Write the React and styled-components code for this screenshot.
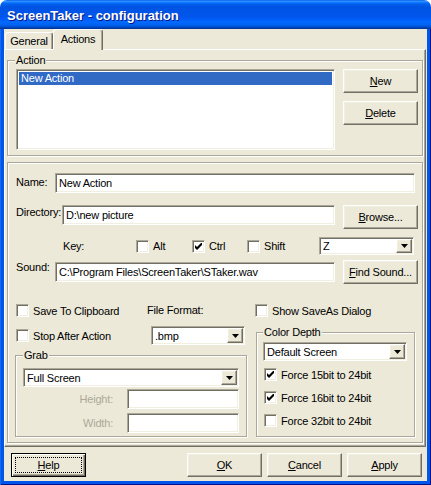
import React from "react";
import styled, { createGlobalStyle, css } from "styled-components";

const GlobalStyle = createGlobalStyle`
  html, body {
    margin: 0;
    padding: 0;
    background: #ffffff;
  }
  body {
    font-family: "Liberation Sans", Arial, sans-serif;
    font-size: 11px;
    letter-spacing: -0.2px;
    color: #000000;
  }
  * {
    box-sizing: border-box;
  }
`;

const sunken = css`
  border: 1px solid;
  border-color: #aca899 #ffffff #ffffff #aca899;
  box-shadow: inset 1px 1px 0 #716f64, inset -1px -1px 0 #f1efe2;
`;

const raised = css`
  border: 1px solid;
  border-color: #ffffff #716f64 #716f64 #ffffff;
  box-shadow: inset -1px -1px 0 #aca899, inset 1px 1px 0 #f1efe2;
`;

const etched = css`
  border: 1px solid #aca899;
  box-shadow: 1px 1px 0 #ffffff, inset 1px 1px 0 #ffffff;
`;

const SWindow = styled.div`
  width: 431px;
  height: 485px;
  display: flex;
  flex-direction: column;
  border-radius: 7px 7px 0 0;
  overflow: hidden;
`;

const STitleBar = styled.div`
  height: 29px;
  flex: none;
  display: flex;
  align-items: center;
  padding: 2px 0 0 7px;
  background: linear-gradient(
    180deg,
    #0058ee 0%,
    #3593ff 4%,
    #288eff 6%,
    #127dff 8%,
    #036ffc 10%,
    #0262ee 14%,
    #0057e5 20%,
    #0054e3 24%,
    #0055eb 56%,
    #005bf5 66%,
    #026afe 76%,
    #0062ef 86%,
    #0052d6 92%,
    #0040ab 96%,
    #003092 100%
  );
`;

const STitle = styled.span`
  font-family: "Liberation Sans", Arial, sans-serif;
  font-weight: bold;
  font-size: 13px;
  letter-spacing: 0;
  color: #ffffff;
  text-shadow: 1px 1px 0 #0a1883;
  white-space: nowrap;
`;

const SFrame = styled.div`
  flex: 1;
  display: flex;
  padding: 0 4px 4px;
  background: #0055ea;
  box-shadow: inset 1px 0 0 #166aee, inset -1px 0 0 #00138c,
    inset 0 -1px 0 #00138c;
`;

const SClient = styled.div`
  flex: 1;
  display: flex;
  flex-direction: column;
  background: #ece9d8;
`;

const STabStrip = styled.div`
  height: 20px;
  flex: none;
  display: flex;
  align-items: flex-end;
  padding-left: 1px;
`;

const STab = styled.div`
  width: ${(p) => p.$w}px;
  height: ${(p) => (p.$active ? 21 : 17)}px;
  margin-bottom: ${(p) => (p.$active ? -1 : 0)}px;
  position: relative;
  z-index: ${(p) => (p.$active ? 2 : 1)};
  display: flex;
  align-items: center;
  justify-content: center;
  padding-bottom: ${(p) => (p.$active ? 3 : 0)}px;
  background: #ece9d8;
  border: 1px solid;
  border-bottom: none;
  border-color: #ffffff #716f64 transparent #ffffff;
  border-radius: 3px 3px 0 0;
  box-shadow: inset -1px 0 0 #aca899;
`;

const STabPage = styled.div`
  width: 422px;
  height: 398px;
  flex: none;
  display: flex;
  flex-direction: column;
  padding: 10px 0 0 2px;
  border: 1px solid;
  border-color: #ffffff #716f64 #716f64 #ffffff;
  box-shadow: inset -1px -1px 0 #aca899;
`;

const SGroup = styled.div`
  position: relative;
  flex: none;
  ${etched}
  width: ${(p) => p.$w}px;
  height: ${(p) => p.$h}px;
  margin-top: ${(p) => p.$mt || 0}px;
  margin-left: ${(p) => p.$ml || 0}px;
  padding: ${(p) => p.$pad};
  display: flex;
  flex-direction: ${(p) => p.$dir || "column"};
`;

const SLegend = styled.span`
  position: absolute;
  top: -7px;
  left: ${(p) => p.$x}px;
  padding: 0 1px;
  line-height: 13px;
  background: #ece9d8;
`;

const SListBox = styled.div`
  width: 319px;
  height: 81px;
  flex: none;
  padding: 2px;
  background: #ffffff;
  ${sunken}
`;

const SListItem = styled.div`
  height: 13px;
  line-height: 13px;
  padding-left: 2px;
  background: ${(p) => (p.$selected ? "#316ac5" : "transparent")};
  color: ${(p) => (p.$selected ? "#ffffff" : "#000000")};
`;

const SButtonColumn = styled.div`
  display: flex;
  flex-direction: column;
  gap: 8px;
  margin-left: 8px;
`;

const SButton = styled.button`
  width: 75px;
  height: 24px;
  flex: none;
  margin: 0;
  margin-left: ${(p) => p.$ml || 0}px;
  padding: 0;
  font-family: "Liberation Sans", Arial, sans-serif;
  font-size: 11px;
  letter-spacing: -0.2px;
  color: #000000;
  background: #ece9d8;
  ${raised}
  ${(p) =>
    p.$default &&
    css`
      border: 1px solid #000000;
      box-shadow: inset 1px 1px 0 #ffffff, inset -1px -1px 0 #716f64,
        inset -2px -2px 0 #aca899;
      outline: 1px dotted #000000;
      outline-offset: -5px;
    `}
  u {
    text-decoration: underline;
  }
`;

const SRow = styled.div`
  display: flex;
  align-items: ${(p) => p.$align || "flex-start"};
  height: ${(p) => p.$h}px;
  margin-top: ${(p) => p.$mt || 0}px;
  flex: none;
`;

const SLabel = styled.span`
  flex: none;
  width: ${(p) => (p.$w ? `${p.$w}px` : "auto")};
  margin-left: ${(p) => p.$ml || 0}px;
  margin-top: ${(p) => p.$mt || 0}px;
  padding-right: ${(p) => p.$pr || 0}px;
  line-height: 13px;
  white-space: nowrap;
  text-align: ${(p) => (p.$right ? "right" : "left")};
  color: ${(p) => (p.$disabled ? "#aca899" : "#000000")};
`;

const STextField = styled.input`
  width: ${(p) => p.$w}px;
  height: 20px;
  flex: none;
  margin: 0;
  margin-top: ${(p) => p.$mt || 0}px;
  padding: 0 3px;
  font-family: "Liberation Sans", Arial, sans-serif;
  font-size: 11px;
  letter-spacing: -0.2px;
  color: #000000;
  background: #ffffff;
  outline: none;
  ${sunken}
`;

const SBevel = styled.div`
  width: 416px;
  height: 281px;
  flex: none;
  margin-top: 6px;
  padding-left: 8px;
  display: flex;
  flex-direction: column;
  ${etched}
`;

const SCheckItem = styled.div`
  display: flex;
  align-items: center;
  gap: 4px;
  height: 13px;
  flex: none;
  width: ${(p) => (p.$w ? `${p.$w}px` : "auto")};
  margin-left: ${(p) => p.$ml || 0}px;
  white-space: nowrap;
`;

const SCheckBox = styled.span`
  width: 13px;
  height: 13px;
  flex: none;
  display: flex;
  align-items: center;
  justify-content: center;
  background: #ffffff;
  ${sunken}
`;

const SCombo = styled.div`
  width: ${(p) => p.$w}px;
  height: ${(p) => p.$h || 19}px;
  flex: none;
  display: flex;
  padding: 1px;
  background: #ffffff;
  ${sunken}
`;

const SComboText = styled.span`
  flex: 1;
  display: flex;
  align-items: center;
  padding-left: 2px;
  white-space: nowrap;
`;

const SArrowButton = styled.span`
  width: 16px;
  flex: none;
  display: flex;
  align-items: center;
  justify-content: center;
  background: #ece9d8;
  ${raised}
`;

const SColumns = styled.div`
  display: flex;
  margin-top: 20px;
`;

const SColumn = styled.div`
  display: flex;
  flex-direction: column;
  width: ${(p) => (p.$w ? `${p.$w}px` : "auto")};
  margin-left: ${(p) => p.$ml || 0}px;
  flex: none;
`;

const SCheckList = styled.div`
  display: flex;
  flex-direction: column;
  gap: 10px;
  margin-top: 7px;
`;

const SButtonBar = styled.div`
  display: flex;
  align-items: flex-start;
  margin-top: 6px;
  padding: 0 5px 0 7px;
`;

const SSpacer = styled.div`
  flex: 1;
`;

const SRightButtons = styled.div`
  display: flex;
  gap: 5px;
`;

const Check = ({ label, checked, w, ml }) => (
  <SCheckItem $w={w} $ml={ml}>
    <SCheckBox>
      {checked && (
        <svg width="7" height="7" viewBox="0 0 7 7">
          <path d="M0 2 L2 4 L6 0 L7 0 L7 2 L2 7 L0 5 Z" fill="#000" />
        </svg>
      )}
    </SCheckBox>
    <span>{label}</span>
  </SCheckItem>
);

const Combo = ({ value, w, h }) => (
  <SCombo $w={w} $h={h}>
    <SComboText>{value}</SComboText>
    <SArrowButton>
      <svg width="7" height="4" viewBox="0 0 7 4">
        <path d="M0 0 H7 L3.5 4 Z" fill="#000" />
      </svg>
    </SArrowButton>
  </SCombo>
);

export default function App() {
  return (
    <>
      <GlobalStyle />
      <SWindow>
        <STitleBar>
          <STitle>ScreenTaker - configuration</STitle>
        </STitleBar>
        <SFrame>
          <SClient>
            <STabStrip>
              <STab $w={48}>General</STab>
              <STab $w={50} $active>
                Actions
              </STab>
            </STabStrip>
            <STabPage>
              <SGroup $w={416} $h={96} $dir="row" $pad="8px 0 0 8px">
                <SLegend $x={7}>Action</SLegend>
                <SListBox>
                  <SListItem $selected>New Action</SListItem>
                </SListBox>
                <SButtonColumn>
                  <SButton>
                    <u>N</u>ew
                  </SButton>
                  <SButton>
                    <u>D</u>elete
                  </SButton>
                </SButtonColumn>
              </SGroup>

              <SBevel>
                <SRow $mt={10} $h={20}>
                  <SLabel $w={39} $mt={3}>
                    Name:
                  </SLabel>
                  <STextField $w={360} defaultValue="New Action" />
                </SRow>

                <SRow $mt={12} $h={24}>
                  <SLabel $w={46} $mt={1}>
                    Directory:
                  </SLabel>
                  <STextField $w={273} defaultValue="D:\new picture" />
                  <SButton $ml={8}>
                    <u>B</u>rowse...
                  </SButton>
                </SRow>

                <SRow $mt={8} $h={18} $align="center">
                  <SLabel $w={73} $ml={47}>
                    Key:
                  </SLabel>
                  <Check w={56} label="Alt" />
                  <Check w={55} label="Ctrl" checked />
                  <Check w={72} label="Shift" />
                  <Combo w={95} h={18} value="Z" />
                </SRow>

                <SRow $mt={5} $h={24}>
                  <SLabel $w={39} $mt={1}>
                    Sound:
                  </SLabel>
                  <STextField
                    $w={280}
                    $mt={2}
                    defaultValue="C:\Program Files\ScreenTaker\STaker.wav"
                  />
                  <SButton $ml={8}>
                    <u>F</u>ind Sound...
                  </SButton>
                </SRow>

                <SColumns>
                  <SColumn $w={232}>
                    <SRow $h={13} $align="center">
                      <Check w={131} label="Save To Clipboard" />
                      <SLabel>File Format:</SLabel>
                    </SRow>
                    <SRow $mt={9} $h={19} $align="center">
                      <Check w={135} label="Stop After Action" />
                      <Combo w={94} value=".bmp" />
                    </SRow>
                    <SGroup $w={232} $h={82} $mt={10} $ml={-1} $pad="12px 0 0 7px">
                      <SLegend $x={7}>Grab</SLegend>
                      <Combo w={216} value="Full Screen" />
                      <SRow $mt={2} $h={20} $align="center">
                        <SLabel $w={104} $pr={14} $right $disabled>
                          Height:
                        </SLabel>
                        <STextField $w={112} />
                      </SRow>
                      <SRow $mt={4} $h={20} $align="center">
                        <SLabel $w={104} $pr={14} $right $disabled>
                          Width:
                        </SLabel>
                        <STextField $w={112} />
                      </SRow>
                    </SGroup>
                  </SColumn>

                  <SColumn $ml={7}>
                    <Check label="Show SaveAs Dialog" />
                    <SGroup $w={159} $h={105} $mt={15} $ml={1} $pad="9px 0 0 6px">
                      <SLegend $x={6}>Color Depth</SLegend>
                      <Combo w={144} value="Default Screen" />
                      <SCheckList>
                        <Check ml={1} label="Force 15bit to 24bit" checked />
                        <Check ml={1} label="Force 16bit to 24bit" checked />
                        <Check ml={1} label="Force 32bit to 24bit" />
                      </SCheckList>
                    </SGroup>
                  </SColumn>
                </SColumns>
              </SBevel>
            </STabPage>

            <SButtonBar>
              <SButton $default>
                <u>H</u>elp
              </SButton>
              <SSpacer />
              <SRightButtons>
                <SButton>
                  <u>O</u>K
                </SButton>
                <SButton>
                  <u>C</u>ancel
                </SButton>
                <SButton>
                  <u>A</u>pply
                </SButton>
              </SRightButtons>
            </SButtonBar>
          </SClient>
        </SFrame>
      </SWindow>
    </>
  );
}
